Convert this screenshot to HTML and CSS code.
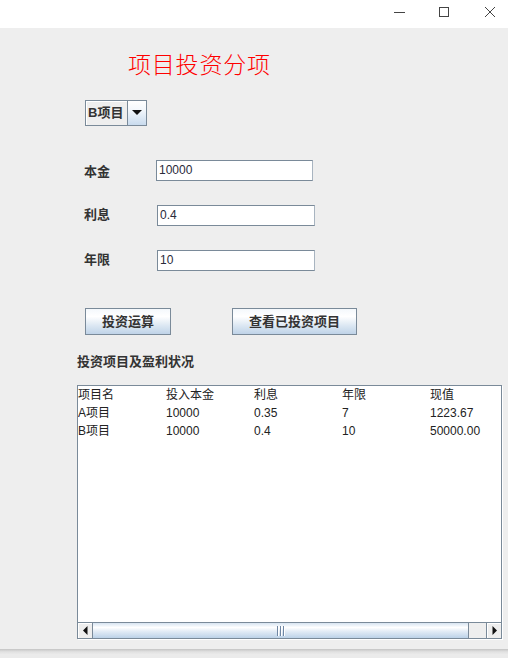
FILE: index.html
```html
<!DOCTYPE html>
<html>
<head>
<meta charset="utf-8">
<link rel="stylesheet" href="styles.css">
</head>
<body>
<div class="titlebar">
  <svg class="controls" width="130" height="28" viewBox="0 0 130 28">
    <line x1="16" y1="12.5" x2="27" y2="12.5" stroke="#444" stroke-width="1"/>
    <rect x="61.5" y="7.5" width="9" height="9" fill="none" stroke="#444" stroke-width="1"/>
    <line x1="107" y1="7" x2="117" y2="17" stroke="#444" stroke-width="1"/>
    <line x1="117" y1="7" x2="107" y2="17" stroke="#444" stroke-width="1"/>
  </svg>
</div>
<div class="window">
  <h1 class="title">项目投资分项</h1>
  <div class="combo">
    <span class="combo-text">B项目</span>
    <span class="combo-btn"><svg width="10" height="6" viewBox="0 0 10 6"><polygon points="0,0 10,0 5,5" fill="#111"/></svg></span>
  </div>
  <div class="form">
    <span class="label label-first">本金</span><div class="field field-first">10000</div>
    <span class="label">利息</span><div class="field">0.4</div>
    <span class="label">年限</span><div class="field">10</div>
  </div>
  <div class="buttons">
    <div class="btn btn-calc">投资运算</div>
    <div class="btn btn-view">查看已投资项目</div>
  </div>
  <div class="caption">投资项目及盈利状况</div>
  <div class="scrollpane">
    <div class="viewport">
      <div class="grid">
        <span>项目名</span><span>投入本金</span><span>利息</span><span>年限</span><span>现值</span>
        <span>A项目</span><span>10000</span><span>0.35</span><span>7</span><span>1223.67</span>
        <span>B项目</span><span>10000</span><span>0.4</span><span>10</span><span>50000.00</span>
      </div>
    </div>
    <div class="hscroll">
      <div class="arrow arrow-left"><svg width="5" height="9" viewBox="0 0 5 9"><polygon points="4.5,0 4.5,9 0,4.5" fill="#111"/></svg></div>
      <div class="thumb"><span class="grip"></span><span class="grip"></span><span class="grip"></span></div>
      <div class="track"></div>
      <div class="arrow arrow-right"><svg width="5" height="9" viewBox="0 0 5 9"><polygon points="0.5,0 0.5,9 5,4.5" fill="#111"/></svg></div>
    </div>
  </div>
</div>
<div class="bottom"></div>
</body>
</html>
```

FILE: styles.css
```css
html, body {
  margin: 0;
  padding: 0;
}
body {
  width: 508px;
  height: 658px;
  overflow: hidden;
  background: #ebebeb;
  font-family: "Liberation Sans", "Noto Sans CJK SC", sans-serif;
  color: #222;
}
.titlebar {
  height: 28px;
  background: #ffffff;
  display: flex;
  justify-content: flex-end;
}
.controls {
  display: block;
}
.window {
  height: 621px;
  background: #eeeeee;
  display: flex;
  flex-direction: column;
  align-items: flex-start;
}
.title {
  margin: 22px 0 0 128px;
  font-family: "Noto Sans CJK SC", sans-serif;
  font-weight: 300;
  font-size: 23px;
  line-height: 26px;
  color: #ff0000;
  letter-spacing: 0.8px;
}
.combo {
  margin: 24px 0 0 85px;
  width: 62px;
  height: 26px;
  box-sizing: border-box;
  border: 1px solid #7a8a99;
  display: flex;
}
.combo-text {
  width: 41px;
  box-sizing: border-box;
  padding-left: 2px;
  background: #eeeeee;
  box-shadow: inset 1px 1px 0 #ffffff;
  font-family: "Liberation Sans", "Noto Sans CJK SC", sans-serif;
  font-weight: bold;
  font-size: 13px;
  line-height: 24px;
  color: #333;
}
.combo-btn {
  flex: 1;
  border-left: 1px solid #7a8a99;
  background: linear-gradient(#ffffff 0%, #f4f8fc 35%, #c9dbee 100%);
  display: flex;
  align-items: center;
  justify-content: center;
}
.form {
  margin: 34px 0 0 84px;
  display: grid;
  grid-template-columns: 73px 158px;
  grid-auto-rows: 21px;
  row-gap: 24px;
}
.label {
  font-weight: bold;
  font-size: 13px;
  line-height: 21px;
  color: #333;
  margin-top: -1px;
}
.label-first {
  margin-top: 1px;
}
.field {
  box-sizing: border-box;
  border: 1px solid #7a8a99;
  border-right-color: #a8b4c0;
  background: #ffffff;
  font-size: 12px;
  line-height: 19px;
  padding-left: 2px;
  color: #2a2a3a;
}
.field-first {
  width: 157px;
  margin-left: -1px;
}
.buttons {
  margin: 37px 0 0 85px;
  display: flex;
  gap: 61px;
}
.btn {
  box-sizing: border-box;
  height: 27px;
  border: 1px solid #7a8a99;
  background: linear-gradient(#f4f8fc 0%, #ffffff 30%, #dde8f3 65%, #bfd3e8 100%);
  font-weight: bold;
  font-size: 13px;
  line-height: 25px;
  color: #333;
  text-align: center;
}
.btn-calc { width: 86px; }
.btn-view { width: 125px; }
.caption {
  margin: 19px 0 0 77px;
  font-weight: bold;
  font-size: 13px;
  line-height: 16px;
  color: #333;
}
.scrollpane {
  margin: 15px 0 0 77px;
  width: 425px;
  height: 254px;
  box-sizing: border-box;
  border: 1px solid #7a8a99;
  box-shadow: 1px 1px 0 #ffffff;
  display: flex;
  flex-direction: column;
}
.viewport {
  flex: 1;
  background: #ffffff;
  overflow: hidden;
}
.grid {
  display: grid;
  grid-template-columns: repeat(5, 88px);
  grid-auto-rows: 18px;
  font-size: 12px;
  line-height: 18px;
  color: #222;
  width: 440px;
}
.hscroll {
  height: 16px;
  box-sizing: border-box;
  border-top: 1px solid #7a8a99;
  display: flex;
  background: #eeeeee;
}
.arrow {
  width: 15px;
  box-sizing: border-box;
  display: flex;
  align-items: center;
  justify-content: center;
  background: #eeeeee;
  box-shadow: inset 1px 1px 0 #ffffff;
}
.arrow-left { border-right: 1px solid #7a8a99; }
.arrow-right { border-left: 1px solid #7a8a99; }
.thumb {
  width: 376px;
  box-sizing: border-box;
  border-right: 1px solid #7a8a99;
  background: linear-gradient(#d7e4f1 0%, #ffffff 30%, #e3ecf6 55%, #bcd2e8 100%);
  display: flex;
  justify-content: center;
  align-items: center;
  gap: 1px;
}
.grip {
  width: 1px;
  height: 10px;
  background: #6f86a3;
  box-shadow: 1px 0 0 #ffffff;
  margin: 0 1px 0 0;
}
.track {
  flex: 1;
  background: #eeeeee;
}
.bottom {
  height: 9px;
  background: linear-gradient(#c4c4c4 0%, #e0e0e0 30%, #ebebeb 60%);
}
```
